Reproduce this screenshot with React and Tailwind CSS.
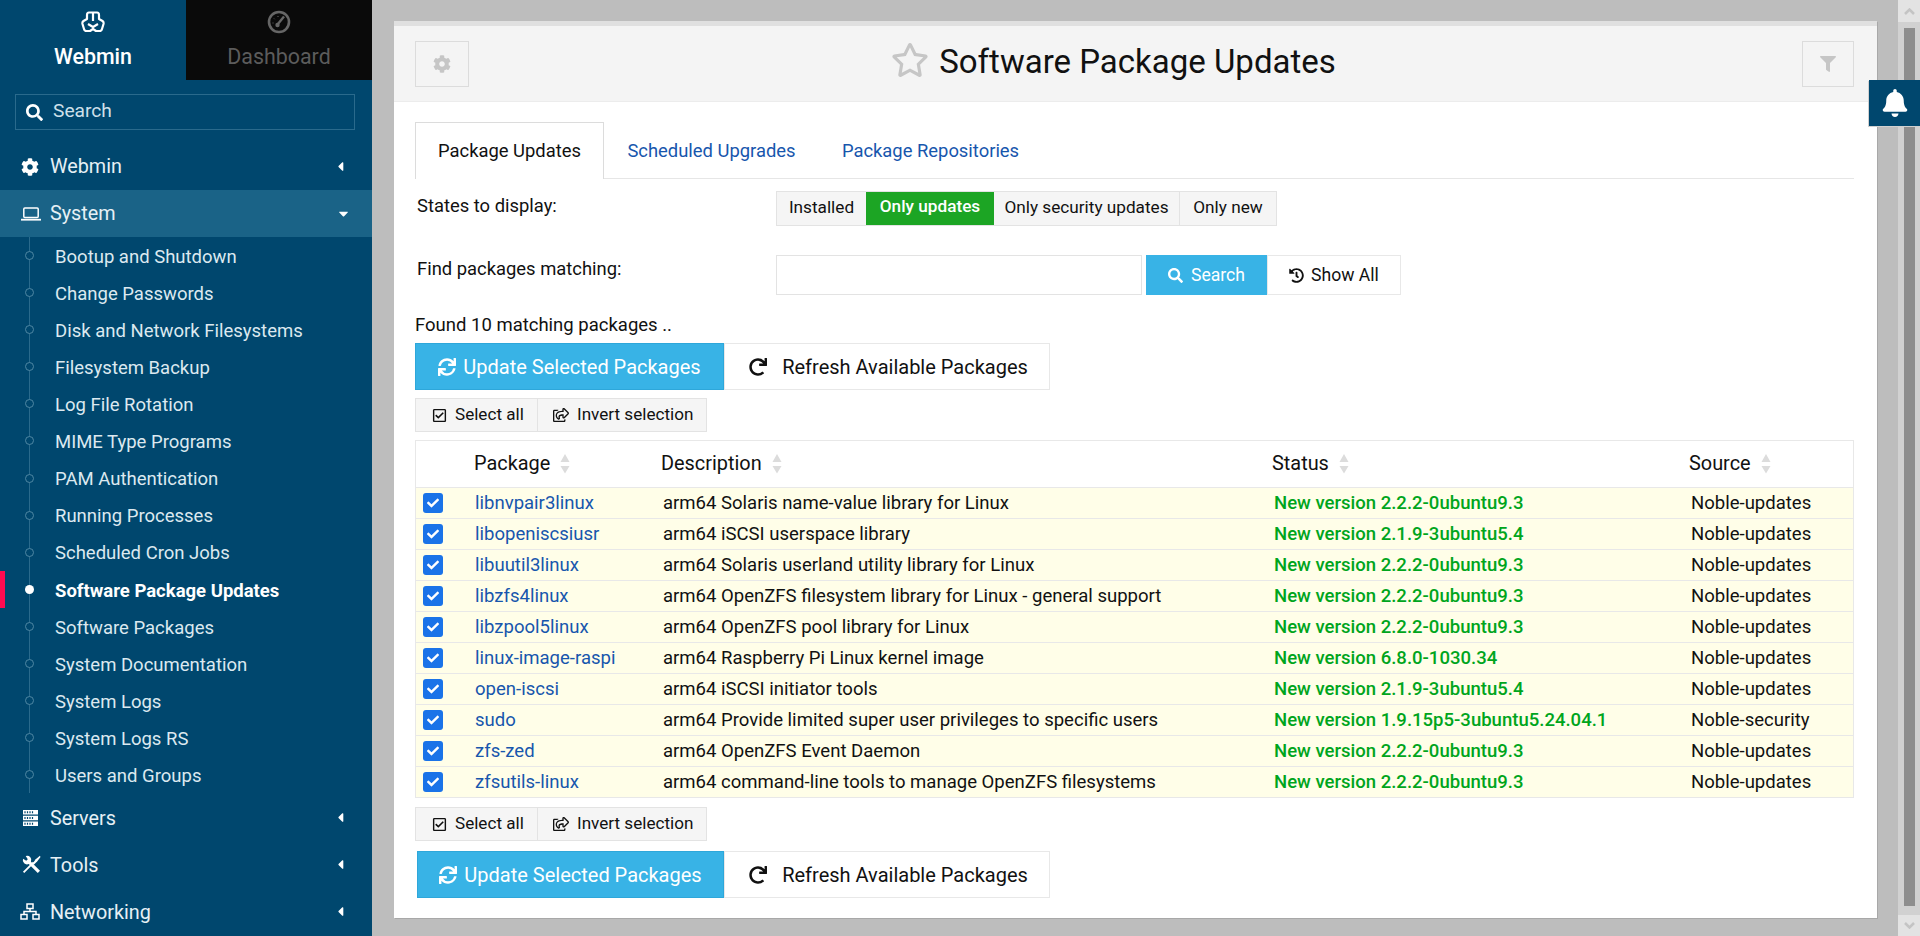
import React from 'react';
import {
  FaCog,
  FaSearch,
  FaRegStar,
  FaFilter,
  FaBell,
  FaSync,
  FaRedo,
  FaRegCheckSquare,
  FaRegShareSquare,
  FaHistory,
  FaCheck,
  FaCaretLeft,
  FaCaretDown,
} from 'react-icons/fa';

const FONT = 'font-["Roboto",sans-serif]';

const systemItems = [
  'Bootup and Shutdown',
  'Change Passwords',
  'Disk and Network Filesystems',
  'Filesystem Backup',
  'Log File Rotation',
  'MIME Type Programs',
  'PAM Authentication',
  'Running Processes',
  'Scheduled Cron Jobs',
  'Software Package Updates',
  'Software Packages',
  'System Documentation',
  'System Logs',
  'System Logs RS',
  'Users and Groups',
];

const packages = [
  ['libnvpair3linux', 'arm64 Solaris name-value library for Linux', 'New version 2.2.2-0ubuntu9.3', 'Noble-updates'],
  ['libopeniscsiusr', 'arm64 iSCSI userspace library', 'New version 2.1.9-3ubuntu5.4', 'Noble-updates'],
  ['libuutil3linux', 'arm64 Solaris userland utility library for Linux', 'New version 2.2.2-0ubuntu9.3', 'Noble-updates'],
  ['libzfs4linux', 'arm64 OpenZFS filesystem library for Linux - general support', 'New version 2.2.2-0ubuntu9.3', 'Noble-updates'],
  ['libzpool5linux', 'arm64 OpenZFS pool library for Linux', 'New version 2.2.2-0ubuntu9.3', 'Noble-updates'],
  ['linux-image-raspi', 'arm64 Raspberry Pi Linux kernel image', 'New version 6.8.0-1030.34', 'Noble-updates'],
  ['open-iscsi', 'arm64 iSCSI initiator tools', 'New version 2.1.9-3ubuntu5.4', 'Noble-updates'],
  ['sudo', 'arm64 Provide limited super user privileges to specific users', 'New version 1.9.15p5-3ubuntu5.24.04.1', 'Noble-security'],
  ['zfs-zed', 'arm64 OpenZFS Event Daemon', 'New version 2.2.2-0ubuntu9.3', 'Noble-updates'],
  ['zfsutils-linux', 'arm64 command-line tools to manage OpenZFS filesystems', 'New version 2.2.2-0ubuntu9.3', 'Noble-updates'],
];

const WebminLogo = () => (
  <svg width="24" height="24" viewBox="0 0 24 24" fill="none" stroke="white" strokeWidth="2.200" strokeLinejoin="round">
    <path d="M8 2.500H16Q18 2.500 18 5V9L21.500 11Q23 12 22.500 14L21 19Q20.500 21 18.500 21H15L12 19L9 21H5.500Q3.500 21 3 19L1.500 14Q1 12 2.500 11L6 9V5Q6 2.500 8 2.500Z" />
    <path d="M12 3V11M7 14L12 17L17 14" />
  </svg>
);

const DashIcon = () => (
  <svg width="24" height="24" viewBox="0 0 24 24" fill="none" stroke="#666" strokeWidth="2.600">
    <circle cx="12" cy="12" r="10" />
    <path d="M10.500 14.500L17 6.500" strokeWidth="2.400" />
    <circle cx="10.500" cy="15" r="2.200" fill="#666" stroke="none" />
    <path d="M5.500 13h1M7 8.500l.7.7M11 6v1" strokeWidth="1" />
  </svg>
);

const LaptopIcon = () => (
  <svg width="20" height="14" viewBox="0 0 20 14" fill="none" stroke="white">
    <rect x="2.800" y="1" width="14.400" height="9.500" rx="1" strokeWidth="1.500" />
    <path d="M0 12.700h20" strokeWidth="1.800" />
  </svg>
);

const ServerIcon = () => (
  <svg width="15" height="16" viewBox="0 0 15 16" className="ml-[2px]">
    <path d="M0 0h15v4.500H0zM0 5.700h15v4.500H0zM0 11.400h15v4.600H0z" fill="white" />
    <path d="M2 1.300v2M4.500 1.300v2M7 1.300v2M9.500 1.300v2M2 7v2M4.500 7v2M7 7v2M9.500 7v2M2 12.700v2M4.500 12.700v2M7 12.700v2M9.500 12.700v2" stroke="#00476e" strokeWidth="1.200" />
  </svg>
);

const ToolsIcon = () => (
  <svg width="19" height="19" viewBox="0 0 18 18" fill="white" className="ml-[1px]">
    <path d="M1.500 16.500L11 7" stroke="white" strokeWidth="1.800" />
    <path d="M10 8L13 4L17 .8L17.500 2L14.500 6L11 9.500Z" />
    <path d="M7 7L16 16" stroke="white" strokeWidth="3" />
    <path d="M1 3.500L4 5.500L5.500 4L3.500 1A4 4 0 0 1 8.500 6.500L6.500 8.500A4 4 0 0 1 1 3.500Z" />
  </svg>
);

const NetworkIcon = () => (
  <svg width="20" height="17" viewBox="0 0 20 17" fill="none" stroke="white" strokeWidth="1.500" className="ml-[-1px]">
    <rect x="7" y="1" width="6" height="4.500" />
    <rect x="1" y="11.500" width="6" height="4.500" />
    <rect x="13" y="11.500" width="6" height="4.500" />
    <path d="M10 5.500v3M4 11.500v-3h12v3" />
  </svg>
);

const SortIcon = () => (
  <svg width="10" height="20" viewBox="0 0 10 20" fill="#dcdcdc" className="ml-[10px]">
    <path d="M5 0L9.500 8H.5z" />
    <path d="M.5 12H9.500L5 19.500z" />
  </svg>
);

const Section = ({ icon, label, open }) => (
  <div className={`flex items-center h-[47px] pl-[21px] pr-[24px] ${open ? 'bg-[#1a6387]' : ''}`}>
    <span className="w-[29px] flex items-center text-white text-[18px]">{icon}</span>
    <span className="flex-1 text-[19.800px] text-[#e6f0f5] pt-[1px]">{label}</span>
    {open ? <FaCaretDown className="text-white text-[15px] mr-[-3px]" /> : <FaCaretLeft className="text-white text-[15px]" />}
  </div>
);

const SubItem = ({ label, active }) => (
  <div className="relative flex items-center h-[37.100px] pl-[55px]">
    {active && <div className="absolute left-0 top-0 w-[5px] h-full bg-[#ff0a50]" />}
    <span
      className={`absolute left-[25px] top-[14px] size-[9px] rounded-full ${
        active ? 'bg-white' : 'bg-[#00476e] border border-[#4f87a3]'
      }`}
    />
    <span className={`text-[18.500px] pt-[4px] ${active ? 'font-bold text-white' : 'text-[#dce9f0]'}`}>{label}</span>
  </div>
);

const Sidebar = () => (
  <div className="w-[372px] h-full shrink-0 bg-[#00476e] overflow-hidden">
    <div className="flex h-[80px]">
      <div className="flex-1 flex flex-col items-center pt-[10px]">
        <WebminLogo />
        <span className="text-[21.400px] font-medium text-white mt-[9px] leading-[28px]">Webmin</span>
      </div>
      <div className="flex-1 flex flex-col items-center pt-[10px] bg-[#0a0a0a]">
        <DashIcon />
        <span className="text-[21.400px] text-[#5c5c5c] mt-[9px] leading-[28px]">Dashboard</span>
      </div>
    </div>
    <div className="pl-[15px] pr-[17px] pt-[14px] pb-[13px]">
      <div className="flex items-center h-[36px] border border-[#2a6a8c] pl-[10px]">
        <FaSearch className="text-white text-[17px] mr-[10px]" />
        <span className="text-[19.200px] text-[#cfe0ea] pb-[2px]">Search</span>
      </div>
    </div>
    <Section icon={<FaCog />} label="Webmin" />
    <Section icon={<LaptopIcon />} label="System" open />
    <div className="relative">
      <div className="absolute left-[29px] top-0 bottom-0 w-px bg-[#2a6a8c]" />
      {systemItems.map((item) => (
        <SubItem key={item} label={item} active={item === 'Software Package Updates'} />
      ))}
    </div>
    <div className="h-[1px]" />
    <Section icon={<ServerIcon />} label="Servers" />
    <Section icon={<ToolsIcon />} label="Tools" />
    <Section icon={<NetworkIcon />} label="Networking" />
  </div>
);

const SmallBtnGroup = () => (
  <div className="flex w-fit h-[34px] border border-[#e3e3e3] bg-[#f5f5f5] text-[17.100px] text-[#111]">
    <div className="flex items-center w-[122px] pl-[16px] border-r border-[#e3e3e3]">
      <FaRegCheckSquare className="text-[15px] mr-[8px]" />
      Select all
    </div>
    <div className="flex items-center w-[168px] pl-[15px]">
      <FaRegShareSquare className="text-[16px] mr-[8px]" />
      Invert selection
    </div>
  </div>
);

const ActionBtns = ({ bottom }) => (
  <div className={`flex h-[47px] text-[20px] ${bottom ? 'pl-[2px]' : ''}`}>
    <div className={`flex items-center justify-center ${bottom ? 'w-[307px]' : 'w-[309px]'} bg-[#38b3e6] border border-[#2ea7da] text-white`}>
      <FaSync className="text-[18px] mr-[7px]" />
      Update Selected Packages
    </div>
    <div className="flex items-center justify-center w-[326px] pl-[3px] bg-white border border-[#e8e8e8] text-[#111]">
      <FaRedo className="text-[18px] mr-[15px]" />
      Refresh Available Packages
    </div>
  </div>
);

const Th = ({ label, className }) => (
  <div className={`flex items-center ${className}`}>
    {label}
    <SortIcon />
  </div>
);

const Row = ({ name, desc, status, source }) => (
  <div className="flex items-center h-[31px] bg-[#fffee8] border-t border-[#e8e8e8] text-[18.550px] text-[#111]">
    <div className="w-[59px] pl-[7px] flex items-center">
      <div className="flex items-center justify-center size-[20px] rounded-[3px] bg-[#1a73e8]">
        <FaCheck className="text-white text-[12px]" />
      </div>
    </div>
    <div className="w-[188px] pt-[2px] text-[#1756ad]">{name}</div>
    <div className="w-[611px] pt-[2px]">{desc}</div>
    <div className="w-[417px] pt-[2px] font-medium text-[#00a51c]">{status}</div>
    <div className="pt-[2px]">{source}</div>
  </div>
);

const Main = () => (
  <div className="flex-1 h-full bg-[#bdbdbd] pt-[21px] pl-[22px] pr-[21px] pb-[18px] relative">
    <div className="h-full bg-white border-t-[5px] border-[#e0e0e0] shadow-[1px_1px_0_#a8a8a8]">
      <div className="flex items-center justify-between h-[76px] bg-[#f4f4f4] border-b border-[#ececec] pl-[21px] pr-[23px]">
        <div className="flex items-center justify-center w-[54px] h-[46px] border border-[#dcdcdc]">
          <FaCog className="text-[#c6c6c6] text-[18px]" />
        </div>
        <div className="flex items-center text-[#111] text-[33px] pr-[44px] pb-[4px]">
          <FaRegStar className="text-[#c6c6c6] text-[38px] mr-[10px] mt-[-4px]" />
          Software Package Updates
        </div>
        <div className="flex items-center justify-center w-[52px] h-[46px] border border-[#dcdcdc]">
          <FaFilter className="text-[#c6c6c6] text-[16px]" />
        </div>
      </div>

      <div className="pl-[21px] pr-[23px] text-[#111]">
        <div className="flex h-[56px] pt-[20px] box-content border-b border-[#e6e6e6] text-[18.400px]">
          <div className="flex items-center justify-center w-[189px] h-[57px] bg-white border border-b-0 border-[#dcdcdc]">
            Package Updates
          </div>
          <div className="flex items-center justify-center w-[215px] h-[56px] pt-[2px] text-[#1756ad]">Scheduled Upgrades</div>
          <div className="flex items-center justify-center w-[223px] h-[56px] pt-[2px] text-[#1756ad]">Package Repositories</div>
        </div>

        <div className="flex pt-[12px] h-[76px] text-[18.400px]">
          <div className="w-[361px] pl-[2px] pt-[1px]">States to display:</div>
          <div className="flex h-[35px] border border-[#e3e3e3] text-[17.200px]">
            <div className="flex items-center justify-center w-[89px] pb-[2px] bg-[#f5f5f5]">Installed</div>
            <div className="flex items-center justify-center w-[128px] pb-[3px] bg-[#1ca524] text-white font-medium">Only updates</div>
            <div className="flex items-center justify-center w-[186px] pb-[2px] bg-[#f5f5f5] border-r border-[#e3e3e3]">Only security updates</div>
            <div className="flex items-center justify-center w-[96px] pb-[2px] bg-[#f5f5f5]">Only new</div>
          </div>
        </div>

        <div className="flex h-[59px] text-[18.400px]">
          <div className="w-[361px] pl-[2px]">Find packages matching:</div>
          <div className="w-[366px] h-[40px] border border-[#e3e3e3]" />
          <div className="flex items-center justify-center w-[121px] h-[40px] ml-[4px] bg-[#38b3e6] text-white text-[17.600px]">
            <FaSearch className="text-[15px] mr-[8px]" />
            Search
          </div>
          <div className="flex items-center justify-center w-[134px] h-[40px] border border-[#e8e8e8] text-[17.600px]">
            <FaHistory className="text-[15px] mr-[7px]" />
            Show All
          </div>
        </div>

        <div className="h-[24px] text-[18.500px] leading-[22px]">Found 10 matching packages ..</div>
        <div className="mt-[5px]">
          <ActionBtns />
        </div>
        <div className="mt-[8px]">
          <SmallBtnGroup />
        </div>

        <div className="mt-[8px] border border-[#e8e8e8]">
          <div className="flex items-center h-[46px] text-[19.900px]">
            <Th label="Package" className="w-[187px] ml-[58px]" />
            <Th label="Description" className="w-[611px]" />
            <Th label="Status" className="w-[417px]" />
            <Th label="Source" />
          </div>
          {packages.map((p) => (
            <Row key={p[0]} name={p[0]} desc={p[1]} status={p[2]} source={p[3]} />
          ))}
        </div>

        <div className="mt-[9px]">
          <SmallBtnGroup />
        </div>
        <div className="mt-[10px]">
          <ActionBtns bottom />
        </div>
      </div>
    </div>
    <div className="absolute right-[-22px] top-[80px] flex items-center justify-center w-[51px] h-[46px] bg-[#00476e] shadow-[-1px_1px_0_#d0d0d0]">
      <FaBell className="text-white text-[28px]" />
    </div>
  </div>
);

const Scrollbar = () => (
  <div className="w-[22px] h-full shrink-0 flex flex-col items-center bg-[#d1d1d1]">
    <div className="w-full h-[22px] bg-[#e3e3e3] flex items-center justify-center text-[#c4c4c4]">
      <svg width="11" height="7" viewBox="0 0 11 7" fill="none" stroke="currentColor" strokeWidth="2.500">
        <path d="M1 6l4.500-4.500L10 6" />
      </svg>
    </div>
    <div className="w-[11px] h-[878px] mt-[6px] bg-[#8e8e8e]" />
    <div className="flex-1" />
    <div className="w-full h-[21px] bg-[#e3e3e3] flex items-center justify-center text-[#c4c4c4]">
      <svg width="11" height="7" viewBox="0 0 11 7" fill="none" stroke="currentColor" strokeWidth="2.500">
        <path d="M1 1l4.500 4.500L10 1" />
      </svg>
    </div>
  </div>
);

export default function App() {
  return (
    <div className={`flex w-full h-[936px] overflow-hidden ${FONT}`}>
      <Sidebar />
      <Main />
      <Scrollbar />
    </div>
  );
}
